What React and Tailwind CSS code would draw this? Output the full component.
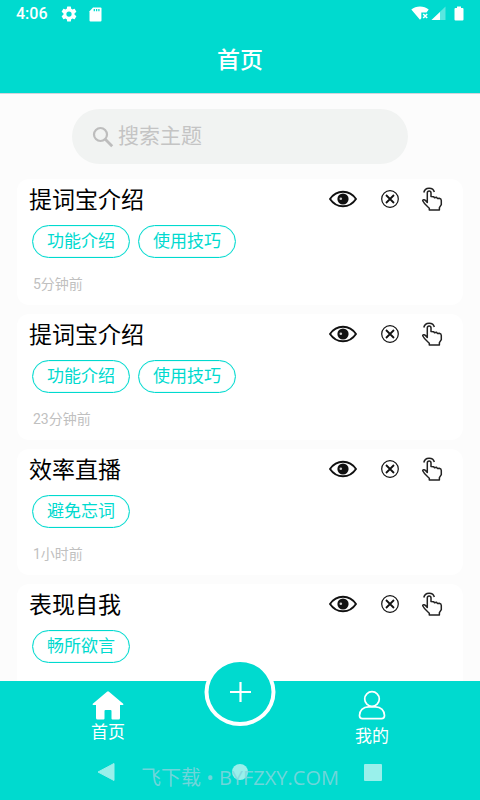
import { useState } from "react";

const notes = [
  { id: 1, title: "提词宝介绍", tags: ["功能介绍", "使用技巧"], time: "5分钟前" },
  { id: 2, title: "提词宝介绍", tags: ["功能介绍", "使用技巧"], time: "23分钟前" },
  { id: 3, title: "效率直播", tags: ["避免忘词"], time: "1小时前" },
  { id: 4, title: "表现自我", tags: ["畅所欲言"] },
];

export default function App() {
  const [keyword, setKeyword] = useState("");

  const visibleNotes = notes.filter((note) => note.title.includes(keyword));

  return (
    <div className="flex h-screen flex-col overflow-hidden bg-[#fcfcfc] font-['Roboto','Noto_Sans_CJK_SC',sans-serif] text-black">
      <header className="shrink-0 border-b border-gray-300 bg-[#00dacf] text-white">
        <StatusBar />
        <h1 className="py-4 text-center text-[23px] leading-[33px] font-medium">
          首页
        </h1>
      </header>

      <main className="min-h-0 flex-1 overflow-y-auto px-4 pt-[15px] [scrollbar-width:none]">
        <label className="mx-auto flex h-[55px] w-3/4 items-center gap-1 rounded-full bg-[#f1f3f2] px-5 text-[#bdbdbd]">
          <SearchIcon />
          <input
            type="search"
            value={keyword}
            onChange={(e) => setKeyword(e.target.value)}
            placeholder="搜索主题"
            aria-label="搜索主题"
            className="min-w-0 flex-1 bg-transparent text-[21px] text-gray-700 outline-none placeholder:text-[#c4c4c4]"
          />
        </label>

        <ul className="mt-[15px] flex flex-col gap-[9px] px-px">
          {visibleNotes.map((note) => (
            <NoteCard key={note.id} {...note} />
          ))}
        </ul>
      </main>

      <footer className="relative shrink-0 bg-[#00dacf] text-white">
        <nav className="grid grid-cols-[1fr_48px_1fr]">
          <a href="#home" className="flex flex-col items-center pt-2 text-[17px] leading-6">
            <HomeIcon />
            首页
          </a>
          <span />
          <a href="#mine" className="flex flex-col items-center gap-1 pt-2 text-[17px] leading-6">
            <UserIcon />
            我的
          </a>
        </nav>

        <button
          type="button"
          aria-label="新建"
          className="absolute -top-[23px] left-1/2 grid h-[68px] w-[71px] -translate-x-1/2 place-items-center rounded-[50%] border-4 border-white bg-[#00dacf]"
        >
          <svg width="22" height="22" viewBox="0 0 22 22" fill="none" stroke="white" strokeWidth="2.2">
            <path d="M11 1v20M0.5 11h21" />
          </svg>
        </button>

        <SystemBar />
      </footer>
    </div>
  );
}

function NoteCard({ title, tags, time }) {
  return (
    <li className="flex h-[126px] shrink-0 flex-col rounded-xl bg-white px-3 pt-1.5">
      <div className="flex items-start justify-between">
        <h2 className="text-[23px] leading-8">{title}</h2>
        <div className="flex h-7 items-center pr-2">
          <button type="button" aria-label="查看">
            <EyeIcon />
          </button>
          <button type="button" aria-label="删除" className="ml-6">
            <CloseIcon />
          </button>
          <button type="button" aria-label="选择" className="ml-[22px]">
            <TapIcon />
          </button>
        </div>
      </div>

      <div className="mt-2 flex gap-2 px-[3px]">
        {tags.map((tag) => (
          <span
            key={tag}
            className="flex h-[33px] items-center rounded-full border border-[#00dacf] px-[14px] text-[17px] text-[#00dacf] shadow-[inset_0_0_1px_#00dacf]"
          >
            {tag}
          </span>
        ))}
      </div>

      {time && (
        <time className="mt-4 px-1 text-[14px] leading-5 text-[#c0c0c0]">{time}</time>
      )}
    </li>
  );
}

function StatusBar() {
  return (
    <div className="flex h-7 items-center justify-between px-4">
      <div className="flex items-center">
        <span className="text-[16px] leading-5 font-medium">4:06</span>
        <svg width="18" height="18" viewBox="0 0 24 24" fill="currentColor" className="ml-3">
          <path d="M19.4 13a7.500 7.500 0 0 0 0-2l2.200-1.700a.5.5 0 0 0 .1-.6l-2-3.500a.5.5 0 0 0-.6-.2l-2.500 1a7.300 7.300 0 0 0-1.700-1l-.4-2.600a.5.5 0 0 0-.5-.4h-4a.5.5 0 0 0-.5.4L9.100 5a7.300 7.300 0 0 0-1.700 1l-2.500-1a.5.5 0 0 0-.6.2l-2 3.500a.5.5 0 0 0 .1.6L4.600 11a7.500 7.500 0 0 0 0 2l-2.200 1.700a.5.5 0 0 0-.1.6l2 3.500c.1.2.4.3.6.2l2.500-1c.5.4 1.100.8 1.700 1l.4 2.600c0 .2.200.4.5.4h4c.2 0 .5-.2.5-.4l.4-2.600a7.300 7.300 0 0 0 1.700-1l2.500 1c.2.1.5 0 .6-.2l2-3.500a.5.5 0 0 0-.1-.6zM12 15.500a3.500 3.500 0 1 1 0-7 3.500 3.500 0 0 1 0 7z" />
        </svg>
        <svg width="13" height="15" viewBox="0 0 13 15" className="ml-[11px]">
          <path d="M4 .5h7.500a1 1 0 0 1 1 1v12a1 1 0 0 1-1 1h-10a1 1 0 0 1-1-1V4.200z" fill="white" />
          <path d="M5.300 2v2.200M7.600 2v2.200M9.900 2v2.200" stroke="#00dacf" strokeWidth="1.300" />
        </svg>
      </div>

      <div className="flex items-center pb-px">
        <svg width="18" height="15" viewBox="0 0 18 15">
          <path d="M0.300 3.500C5 -0.600 13 -0.600 17.700 3.500L15.500 6.500H10.300V12.300L9 13.800z" fill="white" />
          <path d="M12.200 8l4 4M16.200 8l-4 4" stroke="white" strokeWidth="1.600" />
        </svg>
        <svg width="15" height="15" viewBox="0 0 15 15" className="ml-0.5">
          <path d="M14.500 0.500V14H0.500z" fill="white" opacity="0.350" />
          <path d="M9 6v8H0.500z" fill="white" />
        </svg>
        <svg width="10" height="15" viewBox="0 0 10 15" className="ml-2">
          <path d="M3 0.500h4v1.500h1.500a1 1 0 0 1 1 1v10.500a1 1 0 0 1-1 1h-7a1 1 0 0 1-1-1V3a1 1 0 0 1 1-1H3z" fill="white" />
        </svg>
      </div>
    </div>
  );
}

function SystemBar() {
  return (
    <div className="relative grid h-[52px] grid-cols-[1fr_48px_1fr] items-center pb-1">
      <button type="button" aria-label="返回" className="ml-auto mr-[101px]">
        <svg width="18" height="20" viewBox="0 0 18 20">
          <path d="M1 10L17 1.500v17z" fill="#99f0eb" stroke="#99f0eb" strokeLinejoin="round" />
        </svg>
      </button>
      <button type="button" aria-label="主屏幕" className="mx-auto h-4 w-4 rounded-full bg-[#99f0eb]" />
      <button type="button" aria-label="最近任务" className="ml-[100px] h-[17px] w-[18px] rounded-[1px] bg-[#99f0eb]" />
      <p className="pointer-events-none absolute inset-x-0 top-[18px] text-center font-['Open_Sans','Noto_Sans_CJK_SC',sans-serif] text-[20px] leading-6 text-[#84d5dd]/85">
        飞下载 • BYFZXY.COM
      </p>
    </div>
  );
}

function SearchIcon() {
  return (
    <svg width="22" height="22" viewBox="0 0 22 22" fill="none" stroke="currentColor" strokeWidth="2.200">
      <circle cx="8.500" cy="8.500" r="6.500" />
      <path d="M13 13l7.200 7.200" strokeWidth="2.800" />
    </svg>
  );
}

function EyeIcon() {
  return (
    <svg width="28" height="18" viewBox="0 0 28 18">
      <path d="M1 9C7.500 -0.700 20.500 -0.700 27 9C20.500 18.700 7.500 18.700 1 9z" fill="none" stroke="#111" strokeWidth="1.900" strokeLinejoin="round" />
      <circle cx="14" cy="9" r="5.600" fill="#111" />
      <circle cx="11.800" cy="8.700" r="1.300" fill="#ccc" />
    </svg>
  );
}

function CloseIcon() {
  return (
    <svg width="18" height="18" viewBox="0 0 18 18" fill="none" stroke="#111">
      <circle cx="9" cy="9" r="8.300" strokeWidth="1.200" />
      <path d="M5 5l8 8M13 5l-8 8" strokeWidth="1.800" />
    </svg>
  );
}

function TapIcon() {
  return (
    <svg width="22" height="24" viewBox="0 0 22 24" fill="none" stroke="#222" strokeWidth="1.500" strokeLinejoin="round">
      <path d="M2.800 5.500C4 -0.200 12 -0.200 13.300 5" />
      <path d="M6.300 15.500V5.900c0-2.400 3.700-2.400 3.700 0v3.500l2.700.3.800 1 2-.4.900 1.100 2-.1c1.300.2 1.900 1 1.900 2.200v4.200l-1.900 3v2.300H8.300v-1.800C6.500 19.500 3.400 17.500 1.700 13.800c-.2-1.200 1.800-1.500 2.800-.4z" />
    </svg>
  );
}

function HomeIcon() {
  return (
    <svg width="32" height="31" viewBox="0 0 32 31" fill="white">
      <path d="M15 2.800a1.500 1.500 0 0 1 2 0L31.200 14.800c.5.500.3 1.200-.5 1.200H28V29a1.500 1.500 0 0 1-1.500 1.500H20.500a1 1 0 0 1-1-1V22a1 1 0 0 0-1-1h-5a1 1 0 0 0-1 1V29.500a1 1 0 0 1-1 1H5.500A1.500 1.500 0 0 1 4 29V16H1.300c-.8 0-1-.7-.5-1.200z" />
    </svg>
  );
}

function UserIcon() {
  return (
    <svg width="28" height="31" viewBox="0 0 28 31" fill="none" stroke="white" strokeWidth="1.700">
      <circle cx="14" cy="10" r="7.300" />
      <path d="M10.500 17.800h7c5.500 0 9 4 9 8.700 0 2.400-1 3.200-3 3.200h-19c-2 0-3-.8-3-3.200 0-4.700 3.500-8.700 9-8.700z" />
    </svg>
  );
}
